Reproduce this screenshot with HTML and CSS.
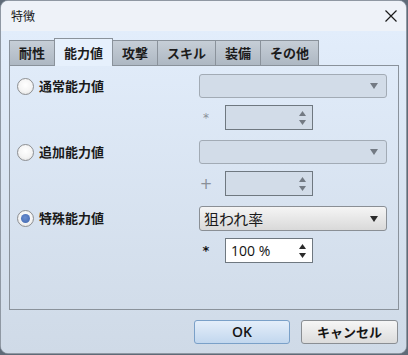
FILE: index.html
```html
<!DOCTYPE html>
<html lang="ja">
<head>
<meta charset="utf-8">
<title>特徴</title>
<link rel="stylesheet" href="styles.css">
</head>
<body>
<div class="window">
  <div class="titlebar">
    <span class="title">特徴</span>
    <svg class="close" width="12" height="12" viewBox="0 0 12 12"><path d="M0.5 0.5 L11.5 11.5 M11.5 0.5 L0.5 11.5" stroke="#1a1a1a" stroke-width="1.2" fill="none"/></svg>
  </div>
  <div class="content">
    <div class="tabs">
      <div class="tab w2">耐性</div>
      <div class="tab w3 active">能力値</div>
      <div class="tab w2">攻撃</div>
      <div class="tab w3">スキル</div>
      <div class="tab w2">装備</div>
      <div class="tab w3">その他</div>
    </div>
    <div class="panel">
      <div class="group">
        <div class="radio"><span class="circle"></span><span class="label">通常能力値</span></div>
        <div class="controls">
          <div class="combo disabled"><span class="combo-text"></span><svg class="arrow" width="8" height="6" viewBox="0 0 8 6"><path d="M0 0 H8 L4 6 Z"/></svg></div>
          <div class="spinrow">
            <span class="op">*</span>
            <div class="spin disabled"><span class="spin-text"></span>
              <span class="spin-arrows"><svg width="7" height="5" viewBox="0 0 7 5"><path d="M3.5 0 L7 5 H0 Z"/></svg><svg width="7" height="5" viewBox="0 0 7 5"><path d="M0 0 H7 L3.5 5 Z"/></svg></span>
            </div>
          </div>
        </div>
      </div>
      <div class="group">
        <div class="radio"><span class="circle"></span><span class="label">追加能力値</span></div>
        <div class="controls">
          <div class="combo disabled"><span class="combo-text"></span><svg class="arrow" width="8" height="6" viewBox="0 0 8 6"><path d="M0 0 H8 L4 6 Z"/></svg></div>
          <div class="spinrow">
            <span class="op plus">+</span>
            <div class="spin disabled"><span class="spin-text"></span>
              <span class="spin-arrows"><svg width="7" height="5" viewBox="0 0 7 5"><path d="M3.5 0 L7 5 H0 Z"/></svg><svg width="7" height="5" viewBox="0 0 7 5"><path d="M0 0 H7 L3.5 5 Z"/></svg></span>
            </div>
          </div>
        </div>
      </div>
      <div class="group">
        <div class="radio checked"><span class="circle"></span><span class="label">特殊能力値</span></div>
        <div class="controls">
          <div class="combo enabled"><span class="combo-text">狙われ率</span><svg class="arrow" width="8" height="6" viewBox="0 0 8 6"><path d="M0 0 H8 L4 6 Z"/></svg></div>
          <div class="spinrow">
            <span class="op active">*</span>
            <div class="spin enabled"><span class="spin-text">100 %</span>
              <span class="spin-arrows"><svg width="7" height="5" viewBox="0 0 7 5"><path d="M3.5 0 L7 5 H0 Z"/></svg><svg width="7" height="5" viewBox="0 0 7 5"><path d="M0 0 H7 L3.5 5 Z"/></svg></span>
            </div>
          </div>
        </div>
      </div>
    </div>
    <div class="buttons">
      <button class="btn default">OK</button>
      <button class="btn">キャンセル</button>
    </div>
  </div>
</div>
</body>
</html>
```
FILE: styles.css
```css
* { box-sizing: border-box; }
html, body { margin: 0; padding: 0; }
body {
  width: 408px;
  height: 355px;
  background: #5f6b78;
  font-family: "Noto Sans CJK JP", "Noto Sans", sans-serif;
  color: #111;
}
.window {
  width: 407px;
  height: 354px;
  border: 1px solid #8f98a3;
  border-radius: 8px;
  overflow: hidden;
  background: linear-gradient(#e2edfb 30px, #cfdae7 100%);
  display: flex;
  flex-direction: column;
}
.titlebar {
  height: 30px;
  flex: none;
  background: #eef2f8;
  display: flex;
  align-items: center;
  justify-content: space-between;
  padding: 0 9px 0 10px;
}
.title {
  font-size: 12px;
  line-height: 14px;
  color: #1b1b1b;
  margin-top: -1px;
}
.close { display: block; margin-top: -1px; }
.content {
  flex: 1;
  padding: 7px 0 0 8px;
  background: linear-gradient(#e2edfb, #cfdae7);
}
.tabs {
  display: flex;
  align-items: flex-end;
  height: 27px;
  position: relative;
  z-index: 1;
}
.tab {
  height: 25px;
  border: 1px solid #8a929b;
  border-bottom: none;
  background: linear-gradient(#c6ced7, #aeb8c3);
  font-size: 13px;
  font-weight: bold;
  line-height: 23px;
  text-align: center;
  color: #1c1c1c;
  margin-right: -1px;
}
.tab.w2 { width: 46px; }
.tab.w3 { width: 59px; }
.tab.active {
  height: 28px;
  margin-bottom: -1px;
  background: #e6f0fc;
  line-height: 27px;
  position: relative;
  z-index: 2;
}
.panel {
  width: 390px;
  height: 245px;
  border: 1px solid #8a929b;
  padding: 8px 11px 0 7px;
  display: flex;
  flex-direction: column;
  gap: 10px;
}
.group {
  display: grid;
  grid-template-columns: 1fr 188px;
}
.radio {
  height: 24px;
  display: flex;
  align-items: center;
  gap: 5px;
}
.circle {
  width: 17px;
  height: 17px;
  border-radius: 50%;
  border: 1px solid #8d8f92;
  background: radial-gradient(circle at 50% 40%, #ffffff 0%, #f4f4f4 55%, #dcdcdc 100%);
  display: flex;
  align-items: center;
  justify-content: center;
}
.radio.checked .circle::after {
  content: "";
  width: 9px;
  height: 9px;
  border-radius: 50%;
  background: radial-gradient(circle at 45% 40%, #6a8fd0, #3f64ad);
}
.label {
  font-size: 13px;
  font-weight: bold;
  line-height: 16px;
  color: #1a1a1a;
}
.controls {
  display: flex;
  flex-direction: column;
  gap: 7px;
}
.combo {
  height: 24px;
  border-radius: 3px;
  display: flex;
  align-items: center;
  justify-content: space-between;
  padding: 0 8px 0 4px;
}
.combo.disabled {
  border: 1px solid #a2abb5;
  background: #d2dce8;
}
.combo.disabled .arrow { fill: #737a83; }
.combo.enabled {
  height: 25px;
  border: 1px solid #8a8f95;
  background: linear-gradient(#f5f5f5, #d9d9d9);
}
.combo.enabled .arrow { fill: #2a2a2a; }
.combo-text {
  font-size: 15px;
  line-height: 18px;
  color: #1a1a1a;
}
.spinrow {
  display: flex;
  align-items: center;
  height: 25px;
}
.op {
  width: 14px;
  text-align: center;
  margin-right: 12px;
  font-size: 12px;
  line-height: 14px;
  color: #8a9098;
  font-family: "DejaVu Sans", sans-serif;
}
.op.plus { font-size: 15px; font-weight: normal; }
.op.active { color: #111; font-weight: bold; font-size: 13px; }
.spin {
  width: 88px;
  height: 25px;
  border: 1px solid #6f7880;
  display: flex;
  align-items: center;
  justify-content: space-between;
  padding: 0 6px 0 5px;
}
.spin.disabled { background: #d2dce8; }
.spin.disabled svg { fill: #737a83; }
.spin.enabled { background: #ffffff; }
.spin.enabled svg { fill: #2a2a2a; }
.spin-text {
  font-size: 14px;
  line-height: 16px;
  color: #111;
  font-family: "Open Sans", "Noto Sans", sans-serif;
}
.spin-arrows {
  display: flex;
  flex-direction: column;
  gap: 4px;
}
.spin-arrows svg { display: block; }
.buttons {
  display: flex;
  justify-content: flex-end;
  gap: 11px;
  padding-right: 8px;
  margin-top: 10px;
}
.btn {
  width: 97px;
  height: 24px;
  border-radius: 3px;
  border: 1px solid #8a8e93;
  background: linear-gradient(#f6f6f6, #dcdcdc);
  font-family: "Noto Sans CJK JP", "Noto Sans", sans-serif;
  font-size: 13px;
  font-weight: bold;
  line-height: 16px;
  color: #151515;
  padding: 0;
}
.btn.default {
  width: 96px;
  border-color: #7aa0c8;
  background: linear-gradient(#e4eefa, #c2d7ee);
  font-family: "Open Sans", "Noto Sans", sans-serif;
  font-weight: 600;
  font-size: 14px;
}
```
